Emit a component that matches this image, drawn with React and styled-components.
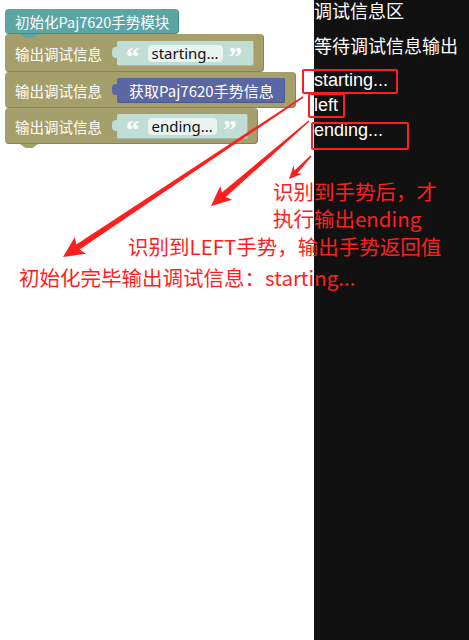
import React from "react";
import styled, { createGlobalStyle } from "styled-components";

const RED = "#ff1e1e";

const GlobalStyle = createGlobalStyle`
  html, body {
    margin: 0;
    padding: 0;
    background: #ffffff;
  }
  body {
    font-family: "Liberation Sans", "Noto Sans CJK SC", sans-serif;
  }
`;

const Page = styled.div`
  position: relative;
  display: grid;
  grid-template-columns: 314px 1fr;
  height: 640px;
  overflow: hidden;
`;

const Workspace = styled.div`
  padding: 9px 0 0 5px;
  display: flex;
  flex-direction: column;
  align-items: flex-start;
`;

const Block = styled.div`
  position: relative;
  display: flex;
  align-items: center;
  gap: 10px;
  box-sizing: border-box;
  height: ${(p) => p.$h}px;
  padding: 0 ${(p) => p.$pr || 10}px 0 10px;
  background: ${(p) => p.$bg};
  border-radius: 4px;
  box-shadow: inset -1px -1px 0 rgba(0, 0, 0, 0.18);
  color: #ffffff;
  font-family: "Noto Sans CJK SC", sans-serif;
  font-size: 14.5px;
  white-space: nowrap;

  &::after {
    content: "";
    position: absolute;
    left: 15px;
    bottom: -4px;
    width: 18px;
    height: 4px;
    background: ${(p) => p.$bg};
    clip-path: polygon(0 0, 100% 0, 70% 100%, 30% 100%);
    z-index: 1;
  }
`;

const Input = styled.div`
  position: relative;
  display: flex;
  align-items: center;
  box-sizing: border-box;
  height: 25px;
  margin-left: 5px;
  padding: 0 ${(p) => (p.$text ? 12 : 11)}px 0 ${(p) => (p.$text ? 9 : 12)}px;
  background: ${(p) => p.$bg};
  border-radius: 2px;
  box-shadow: inset -1px -1px 0 rgba(0, 0, 0, 0.15);
  color: #ffffff;
  font-size: 15px;

  &::before {
    content: "";
    position: absolute;
    left: -5px;
    top: 6px;
    width: 6px;
    height: 11px;
    background: ${(p) => p.$bg};
    border-radius: 4px 0 0 4px;
  }
`;

const Quote = styled.span`
  font-family: "Liberation Serif", serif;
  font-weight: bold;
  font-size: 27px;
  line-height: 1;
  margin: 9px ${(p) => p.$mr || 0}px 0 ${(p) => p.$ml || 0}px;
  color: #ffffff;
`;

const Pill = styled.span`
  display: inline-flex;
  align-items: center;
  height: 17px;
  padding: 0 4px;
  border-radius: 4px;
  background: #e8f2ef;
  color: #111111;
  font-family: "Noto Sans", sans-serif;
  font-size: 15px;
`;

const Console = styled.div`
  background: #111111;
  color: #ffffff;
  font-size: 18px;
`;

const Line = styled.div`
  line-height: ${(p) => p.$lh}px;
  margin-bottom: ${(p) => p.$mb || 0}px;
  font-family: ${(p) =>
    p.$cjk ? `"Noto Sans CJK SC", sans-serif` : `"Liberation Sans", sans-serif`};
  white-space: nowrap;
`;

const Overlay = styled.svg`
  position: absolute;
  left: 0;
  top: 0;
  pointer-events: none;
`;

const Frame = styled.div`
  position: absolute;
  box-sizing: border-box;
  border: 2.5px solid ${RED};
  border-radius: 2px;
`;

const Note = styled.div`
  position: absolute;
  color: ${RED};
  font-family: "Noto Sans CJK SC", sans-serif;
  font-size: 20.5px;
  line-height: 27px;
  white-space: nowrap;
`;

function arrowPoints(tail, tip, w, len, half) {
  const dx = tip[0] - tail[0];
  const dy = tip[1] - tail[1];
  const d = Math.hypot(dx, dy);
  const ux = dx / d;
  const uy = dy / d;
  const nx = -uy;
  const ny = ux;
  const bx = tip[0] - ux * len;
  const by = tip[1] - uy * len;
  const pts = [
    [tail[0] + nx * 0.8, tail[1] + ny * 0.8],
    [bx + nx * (w / 2), by + ny * (w / 2)],
    [bx - ux * 3 + nx * half, by - uy * 3 + ny * half],
    tip,
    [bx - ux * 3 - nx * half, by - uy * 3 - ny * half],
    [bx - nx * (w / 2), by - ny * (w / 2)],
    [tail[0] - nx * 0.8, tail[1] - ny * 0.8],
  ];
  return pts.map((p) => p.map((v) => v.toFixed(1)).join(",")).join(" ");
}

const arrows = [
  { tail: [303, 97], tip: [63, 257], w: 6, len: 18, half: 10 },
  { tail: [309, 121], tip: [211, 206], w: 6, len: 17, half: 9 },
  { tail: [311, 156], tip: [289, 179], w: 4, len: 10, half: 6 },
];

const StringInput = ({ text }) => (
  <Input $text $bg="#c0ddd6">
    <Quote $mr={8}>“</Quote>
    <Pill>{text}</Pill>
    <Quote $ml={6}>”</Quote>
  </Input>
);

export default function App() {
  return (
    <>
      <GlobalStyle />
      <Page>
        <Workspace>
          <Block $h={25} $bg="#5ba5a5">初始化Paj7620手势模块</Block>
          <Block $h={38} $bg="#a59f6b">
            输出调试信息
            <StringInput text="starting..." />
          </Block>
          <Block $h={36} $bg="#a59f6b" $pr={11}>
            输出调试信息
            <Input $bg="#5b67a5">获取Paj7620手势信息</Input>
          </Block>
          <Block $h={36} $bg="#a59f6b">
            输出调试信息
            <StringInput text="ending..." />
          </Block>
        </Workspace>
        <Console>
          <Line $cjk $lh={20} $mb={15}>
            调试信息区
          </Line>
          <Line $cjk $lh={20} $mb={13}>
            等待调试信息输出
          </Line>
          <Line $lh={25}>starting...</Line>
          <Line $lh={25}>left</Line>
          <Line $lh={25}>ending...</Line>
        </Console>

        <Frame style={{ left: 302, top: 69, width: 96, height: 25 }} />
        <Frame style={{ left: 308, top: 93, width: 37, height: 25 }} />
        <Frame style={{ left: 311, top: 122, width: 98, height: 28 }} />

        <Overlay width="469" height="640" viewBox="0 0 469 640">
          {arrows.map((a, i) => (
            <polygon key={i} fill={RED} points={arrowPoints(a.tail, a.tip, a.w, a.len, a.half)} />
          ))}
        </Overlay>

        <Note style={{ left: 273, top: 178 }}>
          识别到手势后，才
          <br />
          执行输出ending
        </Note>
        <Note style={{ left: 128, top: 233 }}>识别到LEFT手势，输出手势返回值</Note>
        <Note style={{ left: 19, top: 264 }}>初始化完毕输出调试信息：starting...</Note>
      </Page>
    </>
  );
}
